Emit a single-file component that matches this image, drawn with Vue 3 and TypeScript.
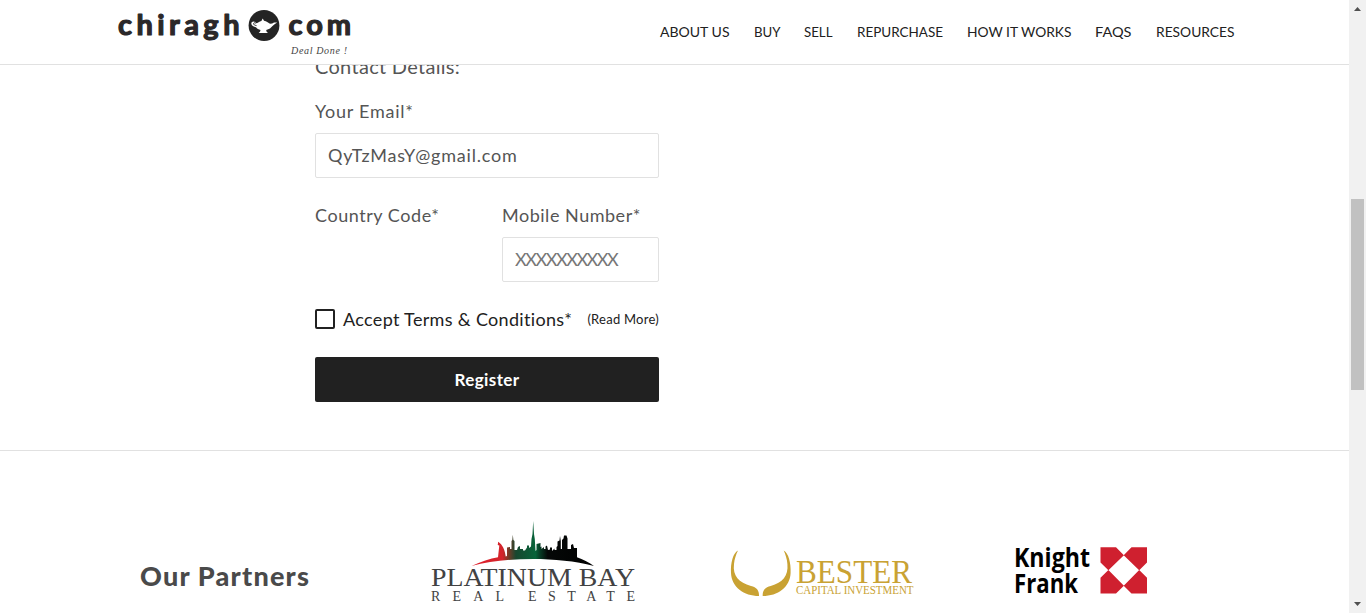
<script setup lang="ts">
import { ref } from 'vue'

interface NavItem {
  label: string
  width: number
}

const nav: NavItem[] = [
  { label: 'ABOUT US', width: 69.5 },
  { label: 'BUY', width: 26.5 },
  { label: 'SELL', width: 28.5 },
  { label: 'REPURCHASE', width: 86 },
  { label: 'HOW IT WORKS', width: 104.5 },
  { label: 'FAQS', width: 36.5 },
  { label: 'RESOURCES', width: 78.5 },
]

const email = ref('QyTzMasY@gmail.com')
const mobile = ref('')
</script>

<template>
  <div class="window">
    <div class="page">
      <header class="header">
        <svg class="brand" width="240" height="60" viewBox="115 0 240 60" role="img" aria-label="chiragh.com">
          <g class="brand-word">
            <text x="118" y="35.3" textLength="121.5">chiragh</text>
            <text x="288.5" y="35.3" textLength="62.5">com</text>
          </g>
          <circle cx="264" cy="25.5" r="15.4" fill="#242424" />
          <path
            d="M262.7 18.6l1.3 2.2c2.6.4 4.2 1.7 5.4 2.8 1.7.2 3.2-.2 4.6-1.2h3.2c-2.8 1.6-4.5 3.4-6.2 5.1-1.2 1.3-3 2.1-4.8 2.5l.3 1.500 1.500 1.600h-9.300l1.400-1.600.4-1.500c-2-.5-3.500-1.400-4.500-2.700-2.200-.4-4.700-1.500-4.700-3.800 0-1.900 2.300-2.700 4-1.500l.5 1.200c2-.2 3.500-1.700 5.600-2.300z"
            fill="#fff"
          />
          <path d="M256.500 25.600c-1.700-.2-3.200-1-2.900-2.200.2-.8 1.500-.9 2 0" fill="none" stroke="#242424" stroke-width=".9" />
          <text class="brand-tag" x="291" y="54" textLength="56">Deal Done !</text>
        </svg>
        <nav class="nav">
          <a v-for="item in nav" :key="item.label" class="nav-link">
            <svg :width="item.width + 4" height="24">
              <text x="2" y="17" :textLength="item.width" lengthAdjust="spacingAndGlyphs">{{ item.label }}</text>
            </svg>
          </a>
        </nav>
      </header>

      <main class="form">
        <h4 class="section-title">Contact Details:</h4>
        <label class="label email-label">Your Email*</label>
        <input v-model="email" class="input email-input" type="text" />
        <div class="phone-row">
          <div class="country"><label class="label country-label">Country Code*</label></div>
          <div class="mobile">
            <label class="label mobile-label">Mobile Number*</label>
            <input v-model="mobile" class="input number-input" type="text" placeholder="XXXXXXXXXX" />
          </div>
        </div>
        <div class="terms">
          <span class="checkbox"></span>
          <span class="terms-text">Accept Terms &amp; Conditions*</span>
          <a class="read-more">(Read More)</a>
        </div>
        <button class="register" type="button">Register</button>
      </main>

      <section class="partners">
        <h2 class="partners-title">Our Partners</h2>
        <svg class="platinum" width="210" height="90" viewBox="428 518 210 90">
          <defs>
            <linearGradient id="skyline" gradientUnits="userSpaceOnUse" x1="472" y1="0" x2="594" y2="0">
              <stop offset="0" stop-color="#e01f2b" />
              <stop offset=".25" stop-color="#d3242b" />
              <stop offset=".3" stop-color="#743b27" />
              <stop offset=".36" stop-color="#17472f" />
              <stop offset=".52" stop-color="#07643a" />
              <stop offset=".56" stop-color="#073a24" />
              <stop offset=".62" stop-color="#050807" />
              <stop offset="1" stop-color="#000" />
            </linearGradient>
          </defs>
          <path
            fill="url(#skyline)"
            d="M471.500 566C481 561.500 490 558.600 498 557.300L499.300 545.500L497.700 545L498.200 541.700C502.500 544.500 505 550 505.700 556.500L507 556V547.500L510 547V549H511.500V541L512.300 540L512.800 534.700L513.400 540L514.500 541V550H517L518 547L520 546V549H523V550.500H525L527 547.500V545.500H529V548L531 546.500L531.500 539L532.500 534L533.200 521L534 534L534.800 539L535.500 551L536.500 550V544L540.500 543V547L541.500 546.500V549L544 547V549H545.500V546.500L547 545.500L548 550L550 549.500V547.500H552V551L554.500 548.500V550H556.500V547L557.500 546V541.500L559.500 540.500L560 536L560.800 541V549H562V540L563.500 538.500L564 535.500H566.500L567.500 538.500V549H571V545L573 544L574 548H577V557.300C583 559.300 588.500 562.300 594 566C575 561 554 559 533 559C511 559 490 561 471.500 566Z"
          />
          <text class="pb-name" x="431" y="586" textLength="204" lengthAdjust="spacingAndGlyphs">PLATINUM BAY</text>
          <text class="pb-sub" x="431" y="601" textLength="73">REAL</text>
          <text class="pb-sub" x="528" y="601" textLength="107">ESTATE</text>
        </svg>
        <svg class="bester" width="190" height="60" viewBox="728 543 190 60">
          <g fill="#c9a233">
            <path d="M738 550.500C733 553 730.500 563 731 573c.5 14 13 23 28 23 .3-5.500-2.500-9-8-10-12-3.500-18.500-10-17-22 .5-5 2-9.500 4-13.500z" />
            <path d="M783.700 550.500c4.800 2.500 7.400 12.500 6.900 22.500-.5 14-12.600 23-27.900 23-.3-5.500 2.500-9 8-10 12-3.500 17.800-10 16.700-22-.4-5-1.900-9.500-3.700-13.500z" />
            <text class="bester-name" x="796" y="583" textLength="116" lengthAdjust="spacingAndGlyphs">BESTER</text>
            <text class="bester-sub" x="796" y="593.700" textLength="117.500" lengthAdjust="spacingAndGlyphs">CAPITAL INVESTMENT</text>
          </g>
        </svg>
        <svg class="knight" width="140" height="60" viewBox="1010 540 140 60">
          <g class="kf-name">
            <text x="1014" y="567" textLength="76" lengthAdjust="spacingAndGlyphs">Knight</text>
            <text x="1014" y="593" textLength="64" lengthAdjust="spacingAndGlyphs">Frank</text>
          </g>
          <path
            fill="#cf202f"
            d="M1100.500 547.300H1116L1123.900 555.200L1108.400 570.300L1100.500 562.500ZM1131.500 547.300H1147V562.500L1139.200 570.300L1123.700 555.200ZM1100.500 577.800L1108.400 569.900L1123.900 585.700L1116 593.600H1100.500ZM1147 577.800V593.600H1131.500L1123.700 585.700L1139.200 569.900Z"
          />
        </svg>
      </section>
    </div>
    <div class="scrollbar">
      <svg width="17" height="17"><path d="M5 11h7l-3.500-4z" fill="#505050" /></svg>
      <div class="thumb"></div>
      <svg class="down" width="17" height="17"><path d="M5 6h7l-3.500 4z" fill="#505050" /></svg>
    </div>
  </div>
</template>

<style>
body {
  margin: 0;
  overflow: hidden;
  background: #fff;
}
</style>

<style scoped>
.window {
  display: flex;
  width: 1366px;
  height: 613px;
  overflow: hidden;
  font-family: Lato, 'Open Sans', sans-serif;
  font-variant-ligatures: none;
  color: #555;
}
.window * {
  box-sizing: border-box;
}
.window svg {
  display: block;
  flex: none;
}
.page {
  width: 1349px;
  height: 613px;
  overflow: hidden;
}
.header {
  position: relative;
  z-index: 2;
  display: flex;
  justify-content: space-between;
  height: 65px;
  padding: 0 113px 0 115px;
  background: #fff;
  border-bottom: 1px solid #e1e1e1;
}
.brand-word {
  font-size: 29px;
  font-weight: 700;
  fill: #2b2829;
  stroke: #2b2829;
  stroke-width: 1.2px;
  stroke-linejoin: round;
}
.brand-tag {
  font: italic 10px 'Liberation Serif', serif;
  fill: #444;
}
.nav {
  display: flex;
  gap: 20px;
  padding-top: 20px;
}
.nav-link text {
  font-size: 14px;
  fill: #212121;
}
.form {
  display: flex;
  flex-direction: column;
  width: 344px;
  height: 385px;
  margin-left: 315px;
}
.section-title {
  height: 24px;
  margin: -11px 0 21px;
  font-size: 20px;
  font-weight: 400;
  line-height: 24px;
  letter-spacing: 0.3px;
}
.label {
  display: block;
  height: 24px;
  font-size: 18px;
  line-height: 24px;
  white-space: nowrap;
}
.email-label {
  margin-bottom: 10px;
  letter-spacing: 0.75px;
}
.country-label {
  letter-spacing: 0.55px;
}
.input {
  display: block;
  width: 100%;
  height: 45px;
  flex: none;
  padding: 0 12px 2px;
  border: 1px solid #e1e1e1;
  border-radius: 2px;
  outline: 0;
  background: #fff;
  color: #555;
  font: 18px Lato, sans-serif;
}
.email-input {
  letter-spacing: 0.8px;
}
.number-input {
  letter-spacing: -1.45px;
}
.input::placeholder {
  color: #777;
}
.phone-row {
  display: flex;
  justify-content: space-between;
  margin-top: 25px;
}
.mobile {
  width: 157px;
}
.mobile-label {
  margin-bottom: 10px;
  letter-spacing: 0.52px;
}
.terms {
  display: flex;
  align-items: center;
  height: 24px;
  margin-top: 25px;
  color: #212121;
  white-space: nowrap;
}
.checkbox {
  width: 20px;
  height: 20px;
  margin: 0 8px 0 0;
  border: 2px solid #212121;
  border-radius: 2px;
}
.terms-text {
  font-size: 18px;
  letter-spacing: 0.33px;
}
.read-more {
  margin-left: auto;
  font-size: 13px;
  letter-spacing: 0.25px;
}
.register {
  height: 45px;
  margin-top: 26px;
  padding: 0;
  border: 0;
  border-radius: 2px;
  background: #212121;
  color: #fff;
  font: 700 17px Lato, sans-serif;
  letter-spacing: 0.4px;
}
.partners {
  display: flex;
  align-items: flex-start;
  height: 163px;
  padding-left: 140px;
  border-top: 1px solid #e1e1e1;
}
.partners-title {
  width: 288px;
  margin: 107px 0 0;
  color: #4a4a4a;
  font-size: 27px;
  font-weight: 900;
  line-height: 36px;
  letter-spacing: 1.2px;
}
.platinum {
  margin-top: 67px;
}
.pb-name {
  font: 26px 'Liberation Serif', serif;
  fill: #424243;
}
.pb-sub {
  font: 14px 'Liberation Serif', serif;
  fill: #424243;
}
.bester {
  margin: 92px 0 0 90px;
}
.bester-name {
  font: 33px 'Liberation Serif', serif;
}
.bester-sub {
  font: 11.5px 'Liberation Serif', serif;
}
.knight {
  margin: 89px 0 0 92px;
}
.kf-name {
  font: 700 27px 'Open Sans', sans-serif;
}
.scrollbar {
  display: flex;
  flex-direction: column;
  width: 17px;
  height: 613px;
  background: #f1f1f1;
}
.thumb {
  width: 13px;
  height: 191px;
  margin: 182px 0 0 2px;
  background: #c1c1c1;
}
.down {
  margin-top: auto;
}
</style>
